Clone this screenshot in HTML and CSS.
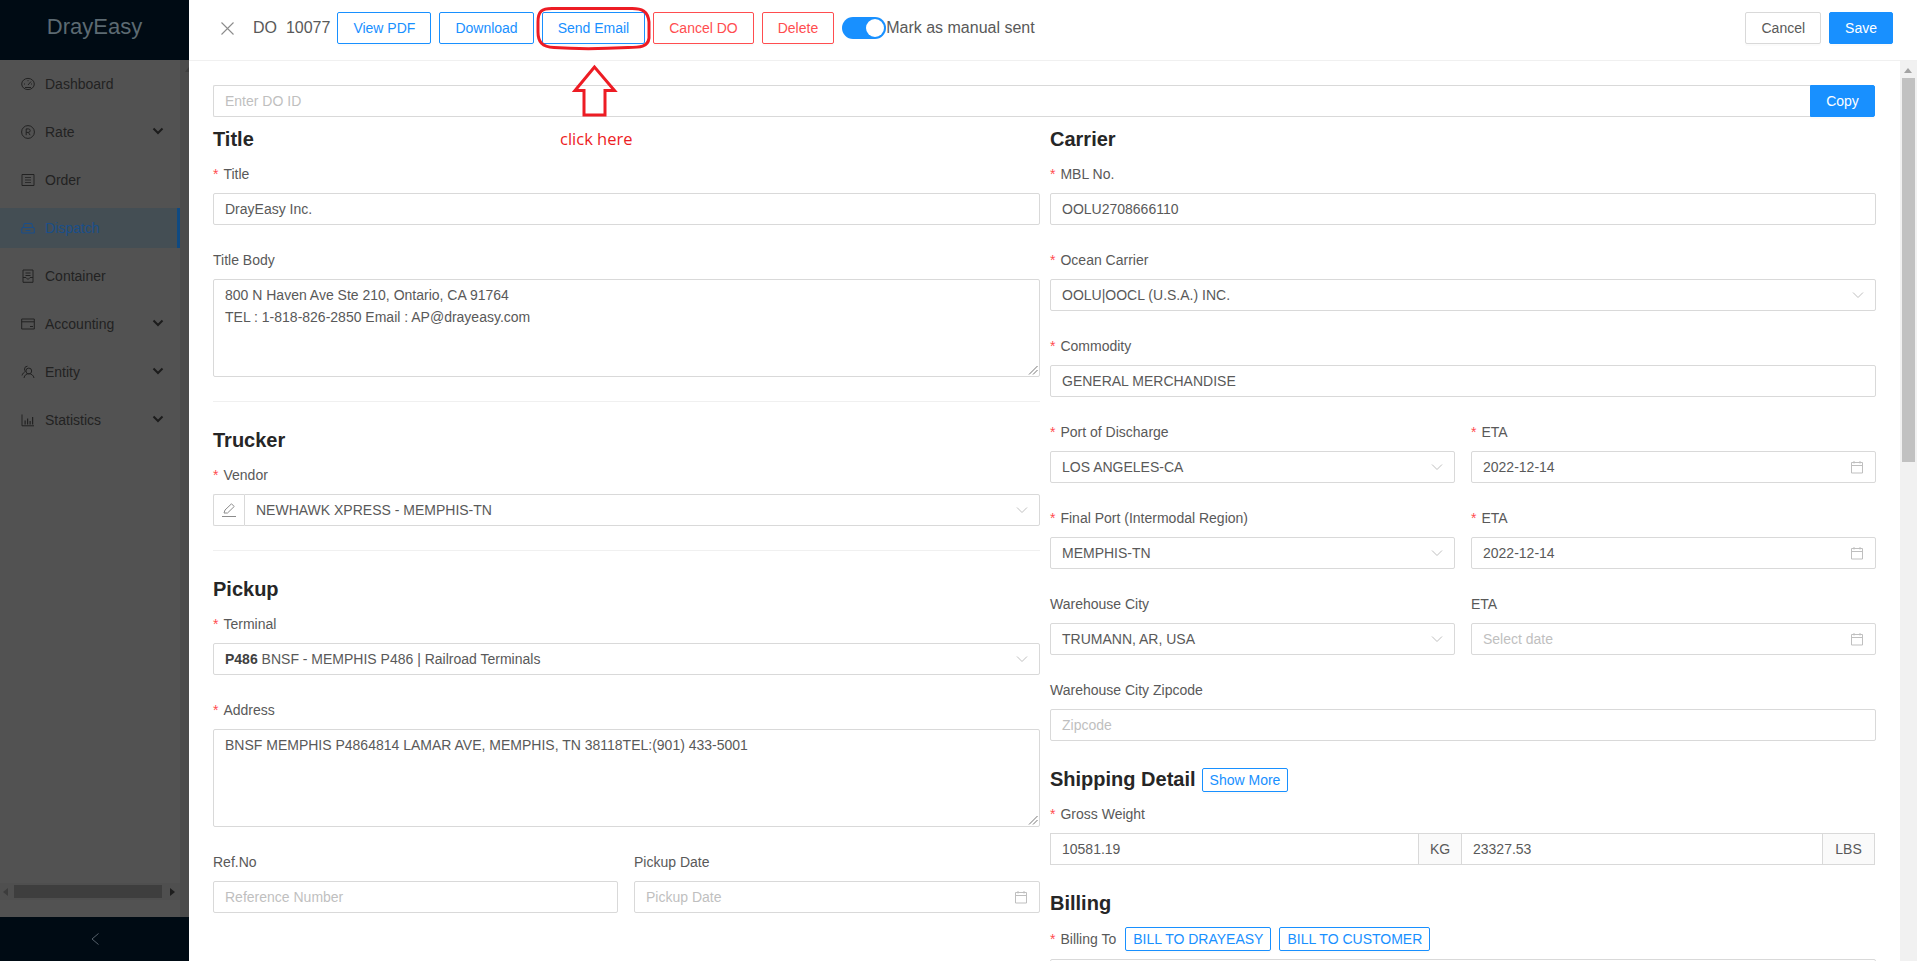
FILE: index.html
```html
<!DOCTYPE html>
<html lang="en">
<head>
<meta charset="utf-8">
<title>DrayEasy - DO 10077</title>
<link rel="stylesheet" href="styles.css">
</head>
<body>
<svg class="sprite" width="0" height="0" aria-hidden="true">
  <symbol id="i-chev" viewBox="0 0 12 12"><path d="M1 3.500 L6 8.500 L11 3.500" fill="none" stroke="currentColor" stroke-width="1"/></symbol>
  <symbol id="i-cal" viewBox="0 0 14 14"><path d="M1.500 2.500h11v10.500h-11z M1.500 5.500h11 M4 1v2.500 M10 1v2.500" fill="none" stroke="currentColor" stroke-width="1"/></symbol>
  <symbol id="i-nav" viewBox="0 0 12 12"><path d="M1.500 3.500 L6 8 L10.500 3.500" fill="none" stroke="currentColor" stroke-width="2"/></symbol>
</svg>
<div class="app">
  <aside class="sidebar">
    <div class="brand">DrayEasy</div>
    <nav class="nav">
      <div class="nav-main">
        <ul class="menu">
          <li class="menu-item"><svg class="menu-icon" viewBox="0 0 14 14"><ellipse cx="7" cy="7" rx="6.300" ry="5.600" fill="none" stroke="currentColor"/><path d="M7 8 L10 4.500 M3 7h1 M10 7h1 M7 3.200v1 M4 10.500h6" fill="none" stroke="currentColor"/></svg><span>Dashboard</span></li>
          <li class="menu-item"><svg class="menu-icon" viewBox="0 0 14 14"><circle cx="7" cy="7" r="6.400" fill="none" stroke="currentColor"/><path d="M5.200 10.200V3.900h2.200a1.700 1.700 0 0 1 0 3.500H5.200 M7.400 7.400l1.700 2.800" fill="none" stroke="currentColor"/></svg><span>Rate</span><svg class="menu-chev"><use href="#i-nav"/></svg></li>
          <li class="menu-item"><svg class="menu-icon" viewBox="0 0 14 14"><path d="M1 1.500h12v11H1z" fill="none" stroke="currentColor"/><path d="M4 4.500h6 M4 7h6 M4 9.500h6" fill="none" stroke="currentColor" stroke-width=".8"/></svg><span>Order</span></li>
          <li class="menu-item active"><svg class="menu-icon" viewBox="0 0 14 14"><path d="M.7 12V7.500a1 1 0 0 1 1-1h10.600a1 1 0 0 1 1 1V12z M2.200 6.500 3.200 2.500h7.600l1 4 M4.500 9.500h5" fill="none" stroke="currentColor"/></svg><span>Dispatch</span></li>
          <li class="menu-item"><svg class="menu-icon" viewBox="0 0 14 14"><path d="M2 1h10v12.300H2z M4.500 4h5 M4.500 6.500h5 M2 8.500h3l2 2 2-2h3" fill="none" stroke="currentColor"/></svg><span>Container</span></li>
          <li class="menu-item"><svg class="menu-icon" viewBox="0 0 14 14"><path d="M.7 2h12.600v10H.7z M.7 4.800h12.600" fill="none" stroke="currentColor"/><path d="M9 9h3v1H9z" fill="currentColor"/></svg><span>Accounting</span><svg class="menu-chev"><use href="#i-nav"/></svg></li>
          <li class="menu-item"><svg class="menu-icon" viewBox="0 0 14 14"><circle cx="7.800" cy="6" r="2.900" fill="none" stroke="currentColor"/><path d="M3 13c.5-3 2.500-4.300 4.800-4.300S12.500 10 13 13 M6.500 1.200A3 3 0 0 0 3.500 4c0 1 .4 1.800 1 2.400C3 7.200 1.500 8.500 1 10.500" fill="none" stroke="currentColor"/></svg><span>Entity</span><svg class="menu-chev"><use href="#i-nav"/></svg></li>
          <li class="menu-item"><svg class="menu-icon" viewBox="0 0 14 14"><path d="M1 1.500v11.300h12" fill="none" stroke="currentColor"/><path d="M3.500 7.500h1.200v4H3.500z M6 5.500h1.200v6H6z M8.500 8h1.200v3.500H8.500z M11 4h1.200v7.500H11z" fill="currentColor"/></svg><span>Statistics</span><svg class="menu-chev"><use href="#i-nav"/></svg></li>
        </ul>
        <div class="nav-hbar"><i class="tri-left"></i><b class="nav-hthumb"></b><i class="tri-right"></i></div>
      </div>
      <div class="nav-vbar"><i class="tri-up-dark"></i></div>
    </nav>
    <div class="collapse"><svg viewBox="0 0 10 14" width="10" height="14"><path d="M8.500 1.500 L2 7 L8.500 12.500" fill="none" stroke="currentColor"/></svg></div>
  </aside>

  <main class="drawer">
    <header class="topbar">
      <svg class="close" viewBox="0 0 13 13" width="13" height="13"><path d="M.5.5 L12.500 12.500 M12.500.5 L.5 12.500" fill="none" stroke="currentColor" stroke-width="1.100"/></svg>
      <span class="do-id">DO&nbsp;&nbsp;10077</span>
      <button class="btn outline">View PDF</button>
      <button class="btn outline">Download</button>
      <button class="btn outline">Send Email</button>
      <button class="btn danger">Cancel DO</button>
      <button class="btn danger">Delete</button>
      <span class="toggle"><i class="knob"></i></span>
      <span class="toggle-label">Mark as manual sent</span>
      <div class="topbar-end">
        <button class="btn plain">Cancel</button>
        <button class="btn primary">Save</button>
      </div>
    </header>

    <div class="drawer-body">
      <div class="content">
        <div class="do-row">
          <div class="field grow joined-r placeholder">Enter DO ID</div>
          <button class="btn primary copy">Copy</button>
        </div>
        <div class="columns">
          <section>
            <h3 class="heading">Title</h3>
            <div class="item"><label class="label req">Title</label><div class="field">DrayEasy Inc.</div></div>
            <div class="item"><label class="label">Title Body</label>
              <div class="field area">800 N Haven Ave Ste 210, Ontario, CA 91764<br>TEL : 1-818-826-2850 Email : AP@drayeasy.com
                <svg class="grip" viewBox="0 0 10 10" width="10" height="10"><path d="M9.500 1 L1 9.500 M9.500 5 L5 9.500" stroke="#777" fill="none"/></svg>
              </div>
            </div>
            <hr class="divider">
            <h3 class="heading">Trucker</h3>
            <div class="item"><label class="label req">Vendor</label>
              <div class="group">
                <span class="addon edit"><svg viewBox="0 0 16 16" width="16" height="16"><path d="M3 11 L4 8 L10.500 1.800 L13.200 4.500 L6.500 11z M1 14.500h14" fill="none" stroke="#8c8c8c"/></svg></span>
                <div class="field select grow">NEWHAWK XPRESS - MEMPHIS-TN<svg class="suffix"><use href="#i-chev"/></svg></div>
              </div>
            </div>
            <hr class="divider">
            <h3 class="heading">Pickup</h3>
            <div class="item"><label class="label req">Terminal</label><div class="field select"><span><b class="code">P486</b> BNSF - MEMPHIS P486 | Railroad Terminals</span><svg class="suffix"><use href="#i-chev"/></svg></div></div>
            <div class="item"><label class="label req">Address</label>
              <div class="field area">BNSF MEMPHIS P4864814 LAMAR AVE, MEMPHIS, TN 38118TEL:(901) 433-5001
                <svg class="grip" viewBox="0 0 10 10" width="10" height="10"><path d="M9.500 1 L1 9.500 M9.500 5 L5 9.500" stroke="#777" fill="none"/></svg>
              </div>
            </div>
            <div class="split left-split">
              <div class="item"><label class="label">Ref.No</label><div class="field placeholder">Reference Number</div></div>
              <div class="item"><label class="label">Pickup Date</label><div class="field select placeholder">Pickup Date<svg class="suffix cal"><use href="#i-cal"/></svg></div></div>
            </div>
          </section>

          <section>
            <h3 class="heading">Carrier</h3>
            <div class="item"><label class="label req">MBL No.</label><div class="field">OOLU2708666110</div></div>
            <div class="item"><label class="label req">Ocean Carrier</label><div class="field select">OOLU|OOCL (U.S.A.) INC.<svg class="suffix"><use href="#i-chev"/></svg></div></div>
            <div class="item"><label class="label req">Commodity</label><div class="field">GENERAL MERCHANDISE</div></div>
            <div class="split">
              <div class="item"><label class="label req">Port of Discharge</label><div class="field select">LOS ANGELES-CA<svg class="suffix"><use href="#i-chev"/></svg></div></div>
              <div class="item"><label class="label req">ETA</label><div class="field select">2022-12-14<svg class="suffix cal"><use href="#i-cal"/></svg></div></div>
            </div>
            <div class="split">
              <div class="item"><label class="label req">Final Port (Intermodal Region)</label><div class="field select">MEMPHIS-TN<svg class="suffix"><use href="#i-chev"/></svg></div></div>
              <div class="item"><label class="label req">ETA</label><div class="field select">2022-12-14<svg class="suffix cal"><use href="#i-cal"/></svg></div></div>
            </div>
            <div class="split">
              <div class="item"><label class="label">Warehouse City</label><div class="field select">TRUMANN, AR, USA<svg class="suffix"><use href="#i-chev"/></svg></div></div>
              <div class="item"><label class="label">ETA</label><div class="field select placeholder">Select date<svg class="suffix cal"><use href="#i-cal"/></svg></div></div>
            </div>
            <div class="item"><label class="label">Warehouse City Zipcode</label><div class="field placeholder">Zipcode</div></div>
            <h3 class="heading with-action">Shipping Detail <button class="btn outline small">Show More</button></h3>
            <div class="item"><label class="label req">Gross Weight</label>
              <div class="group weight">
                <div class="field grow">10581.19</div><span class="addon unit kg">KG</span><div class="field mid">23327.53</div><span class="addon unit lbs">LBS</span>
              </div>
            </div>
            <h3 class="heading">Billing</h3>
            <div class="billing"><label class="label req inline">Billing To</label><button class="btn outline small">BILL TO DRAYEASY</button><button class="btn outline small">BILL TO CUSTOMER</button></div>
            <div class="field select">&nbsp;</div>
          </section>
        </div>
      </div>
      <div class="scrollbar"><i class="tri-up"></i><b class="thumb"></b></div>
    </div>
  </main>
</div>

<div class="annotation">
  <svg viewBox="0 0 130 120" width="130" height="120">
    <path d="M22 8.500 H100 C112 8 118 11 119 22 L119 38 C118 47 110 47.500 98 47.500 C70 49 45 49 24 47.500 C12 47 8 42 8 32 L8 22 C8 11 12 8.500 22 8.500 Z" fill="none" stroke="#ed1c24" stroke-width="3"/>
    <path d="M64.500 67 L45 90.500 H54 V115 H75 V90.500 H84.500 Z" fill="none" stroke="#ed1c24" stroke-width="3" stroke-linejoin="miter"/>
  </svg>
  <span class="annotation-text">click here</span>
</div>
</body>
</html>
```
FILE: styles.css
```css
* { box-sizing: border-box; }
html, body { margin: 0; height: 100%; overflow: hidden; }
body { font: 14px/22px "Liberation Sans", Arial, sans-serif; color: #595959; background: #fff; }
.sprite { position: absolute; }
ul { list-style: none; margin: 0; padding: 0; }
button { font: inherit; cursor: pointer; }

.app { display: flex; height: 961px; }

/* sidebar under the drawer mask */
.sidebar { width: 189px; flex: none; display: flex; flex-direction: column; background: #525252; }
.brand { height: 60px; flex: none; background: #000b14; color: #5c6a72; font-size: 22px; line-height: 54px; text-align: center; }
.nav { flex: 1; display: flex; min-height: 0; }
.nav-main { width: 180px; flex: none; display: flex; flex-direction: column; }
.menu { flex: 1; padding-top: 4px; }
.menu-item { height: 40px; margin-bottom: 8px; display: flex; align-items: center; padding-left: 21px; color: #222; }
.menu-item.active { background: #444e54; color: #1a4e8a; border-right: 3px solid #0f4a82; }
.menu-icon { width: 14px; height: 14px; margin-right: 10px; flex: none; }
.menu-chev { width: 12px; height: 12px; margin-left: auto; margin-right: 16px; margin-top: -2px; color: #1c1c1c; }
.nav-vbar { flex: 1; background: #4b4b4b; position: relative; }
.tri-up-dark { position: absolute; top: 7px; right: 0; border: 4px solid transparent; border-right-width: 0; border-top: 0; border-bottom: 5px solid #3e3e3e; }
.nav-hbar { height: 17px; margin-bottom: 17px; flex: none; background: #4f4f4f; display: flex; align-items: center; }
.nav-hthumb { width: 148px; height: 13px; background: #3e3e3e; margin-left: 6px; }
.tri-left { margin-left: 3px; border: 4px solid transparent; border-left: 0; border-right: 5px solid #3c3c3c; }
.tri-right { border: 4px solid transparent; border-right: 0; border-left: 5px solid #1e1e1e; margin-left: 8px; }
.collapse { height: 44px; flex: none; background: #000b14; color: #55606a; display: flex; align-items: center; justify-content: center; }

/* drawer */
.drawer { flex: 1; min-width: 0; display: flex; flex-direction: column; }
.topbar { height: 61px; flex: none; border-bottom: 1px solid #f0f0f0; display: flex; align-items: center; gap: 8px; padding: 0 24px 4px 32px; }
.close { color: #8c8c8c; margin-right: 11px; flex: none; }
.do-id { font-size: 16px; margin-right: -1px; }
.toggle { width: 44px; height: 22px; border-radius: 11px; background: #1890ff; position: relative; flex: none; }
.knob { position: absolute; top: 2px; right: 2px; width: 18px; height: 18px; border-radius: 50%; background: #fff; }
.toggle-label { font-size: 16px; margin-left: -8px; }
.topbar-end { margin-left: auto; display: flex; gap: 8px; }

.btn { height: 32px; padding: 0 15px; border: 1px solid #d9d9d9; background: #fff; border-radius: 2px; color: #595959; white-space: nowrap; box-shadow: 0 2px 0 rgba(0,0,0,.015); }
.btn.outline { border-color: #1890ff; color: #1890ff; }
.btn.danger { border-color: #ff4d4f; color: #ff4d4f; }
.btn.primary { background: #1890ff; border-color: #1890ff; color: #fff; }
.btn.small { height: 24px; padding: 0 7px; line-height: 22px; }
.btn.copy { width: 65px; padding: 0; border-radius: 0 2px 2px 0; }

.drawer-body { flex: 1; min-height: 0; display: flex; }
.content { flex: 1; min-width: 0; padding: 24px 24px 0 24px; overflow: hidden; }
.do-row { display: flex; margin: 0 1px 8px 0; }
.columns { display: grid; grid-template-columns: 827px 826px; column-gap: 10px; }

.heading { margin: 0 0 10px; height: 28px; font-size: 20px; line-height: 28px; font-weight: 700; color: #262626; }
.with-action { display: flex; align-items: center; gap: 6px; }
.with-action .btn { font-size: 14px; font-weight: 400; margin-top: 2px; }
.item { margin-bottom: 24px; min-width: 0; }
.label { display: block; height: 22px; margin-bottom: 8px; color: #595959; }
.label.req::before { content: "*"; color: #ff4d4f; margin-right: 5px; font-family: "Liberation Sans", sans-serif; }
.label.inline { margin: 0; display: inline-block; line-height: 24px; height: 24px; }

.field { height: 32px; border: 1px solid #d9d9d9; border-radius: 2px; padding: 4px 11px; color: #595959; background: #fff; position: relative; white-space: nowrap; }
.field.placeholder { color: #bfbfbf; }
.grow { flex: 1; min-width: 0; }
.joined-r { border-radius: 2px 0 0 2px; border-right: 0; }
.select { padding-right: 30px; }
.suffix { position: absolute; right: 11px; top: 9px; width: 12px; height: 12px; color: #bfbfbf; }
.suffix.cal { width: 14px; height: 14px; top: 8px; }
.code { color: #404040; }
.area { height: 98px; white-space: normal; padding-top: 4px; line-height: 22px; }
.grip { position: absolute; right: 1px; bottom: 1px; }
.divider { border: 0; border-top: 1px solid #f0f0f0; margin: 0 0 24px; }

.group { display: flex; }
.weight { margin-right: 1px; }
.addon { display: flex; align-items: center; justify-content: center; height: 32px; background: #fafafa; border: 1px solid #d9d9d9; flex: none; }
.edit { width: 31px; background: #fff; border-right: 0; border-radius: 2px 0 0 2px; }
.edit + .field { border-radius: 0 2px 2px 0; }
.weight .field { border-radius: 0; }
.unit { border-left: 0; }
.kg { width: 43px; }
.mid { width: 361px; border-left: 0; }
.lbs { width: 52px; border-left: 0; }

.split { display: grid; grid-template-columns: 405px 405px; column-gap: 16px; }
.left-split { grid-template-columns: 405px 406px; }

.billing { display: flex; gap: 8px; height: 24px; margin-bottom: 8px; }
.billing .btn:first-of-type { margin-left: 1px; }

.scrollbar { width: 17px; flex: none; background: #f1f1f1; display: flex; flex-direction: column; align-items: center; position: relative; padding-top: 17px; }
.thumb { width: 13px; height: 384px; background: #c1c1c1; }
.tri-up { position: absolute; top: 7px; left: 4px; border: 4.500px solid transparent; border-top: 0; border-bottom: 5px solid #a3a3a3; }

/* red hand-drawn callout over the toolbar */
.annotation { position: absolute; left: 530px; top: 0; width: 130px; height: 150px; pointer-events: none; }
.annotation svg { display: block; }
.annotation-text { position: absolute; left: 30px; top: 127px; font: 16.500px/24px "Open Sans", sans-serif; color: #ed1c24; white-space: nowrap; }
```
